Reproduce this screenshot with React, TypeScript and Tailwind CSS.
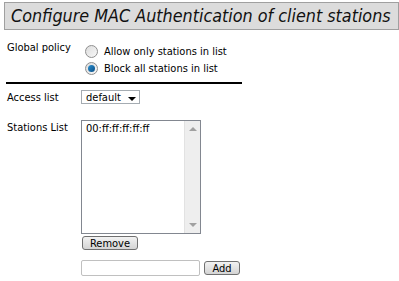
import React from "react";

function Radio({ checked }: { checked?: boolean }) {
  return (
    <span className="w-[13px] h-[13px] rounded-full border border-[#8f8f8f] bg-gradient-to-br from-[#dcdcdc] to-[#f8f8f8] flex items-center justify-center shrink-0">
      {checked && (
        <span className="w-[7px] h-[7px] rounded-full bg-gradient-to-br from-[#2a8fd0] to-[#0b4f86]" />
      )}
    </span>
  );
}

function Button({ label, cls }: { label: string; cls: string }) {
  return (
    <button
      className={
        "border border-[#707070] rounded-[3px] bg-gradient-to-b from-[#f2f2f2] to-[#d4d4d4] text-[11px] text-black leading-none flex items-center justify-center " +
        cls
      }
    >
      {label}
    </button>
  );
}

export default function App() {
  return (
    <div
      className="w-[399px] h-[281px] bg-white text-black overflow-hidden"
      style={{ fontFamily: '"DejaVu Sans Condensed", "DejaVu Sans", sans-serif' }}
    >
      <div className="mt-[2px] ml-[4px] h-[28px] bg-[#dcdcdc] border border-[#a0a0a0] pl-[6px] flex items-center">
        <span className="text-[17.8px] italic leading-none text-[#111]">
          Configure MAC Authentication of client stations
        </span>
      </div>

      <div className="pl-[7px] text-[11px] leading-[13px]">
        <div className="flex mt-[11px]">
          <div className="w-[74px]">Global policy</div>
          <div className="flex flex-col pl-[4px] pt-[2px]">
            <div className="flex items-center gap-[6px] h-[17px]">
              <Radio />
              <span>Allow only stations in list</span>
            </div>
            <div className="flex items-center gap-[6px] h-[17px]">
              <Radio checked />
              <span>Block all stations in list</span>
            </div>
          </div>
        </div>

        <div className="mt-[5px] -ml-[1px] w-[236px] h-[2px] bg-black" />

        <div className="flex items-center mt-[6px]">
          <div className="w-[74px]">Access list</div>
          <div className="w-[59px] h-[14px] border border-[#a5acb2] flex items-center justify-between pl-[4px] pr-[3px]">
            <span className="leading-none">default</span>
            <span className="w-0 h-0 border-l-[4px] border-r-[4px] border-t-[4px] border-l-transparent border-r-transparent border-t-black mt-[4px]" />
          </div>
        </div>

        <div className="flex mt-[16px]">
          <div className="w-[74px] pt-[1px]">Stations List</div>
          <div className="flex flex-col">
            <div className="w-[120px] h-[114px] border border-[#828790] flex">
              <div className="flex-1 pl-[4px] pt-[1px]">00:ff:ff:ff:ff:ff</div>
              <div className="w-[16px] bg-[#eeeeee] border-l border-[#e2e2e2] flex flex-col justify-between items-center py-[6px]">
                <span className="w-0 h-0 border-l-[4px] border-r-[4px] border-b-[4px] border-l-transparent border-r-transparent border-b-[#a0a0a0]" />
                <span className="w-0 h-0 border-l-[4px] border-r-[4px] border-t-[4px] border-l-transparent border-r-transparent border-t-[#a0a0a0]" />
              </div>
            </div>
            <Button label="Remove" cls="w-[56px] h-[14px] mt-[2px] ml-[1px]" />
            <div className="flex items-center mt-[10px] gap-[4px]">
              <div className="w-[119px] h-[16px] border border-[#c0c0c0] rounded-[2px]" />
              <Button label="Add" cls="w-[36px] h-[14px]" />
            </div>
          </div>
        </div>
      </div>
    </div>
  );
}
